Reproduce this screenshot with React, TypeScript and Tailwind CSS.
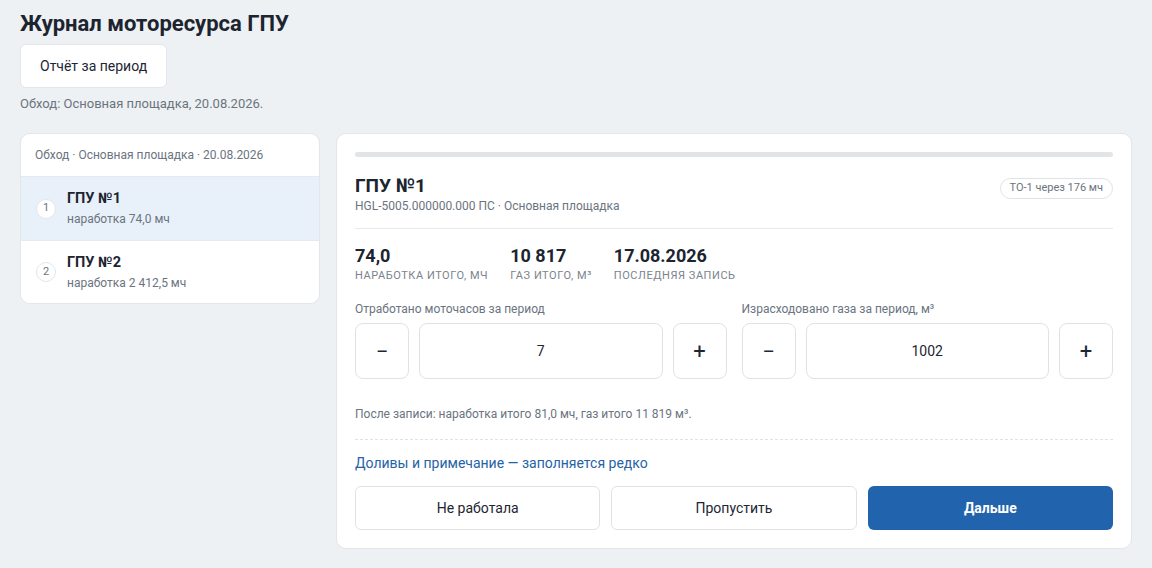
import { useState } from "react";

const units = [
  { id: 1, name: "ГПУ №1", hours: "наработка 74,0 мч" },
  { id: 2, name: "ГПУ №2", hours: "наработка 2 412,5 мч" },
];

const stats = [
  { value: "74,0", label: "Наработка итого, мч" },
  { value: "10 817", label: "Газ итого, м³" },
  { value: "17.08.2026", label: "Последняя запись" },
];

function Stepper({ label, value }: { label: string; value: number }) {
  return (
    <div className="flex-1 min-w-0">
      <p className="text-[12px] text-[#6b7480] mb-[6px] leading-[16px]">{label}</p>
      <div className="flex gap-[10px]">
        <button className="w-[54px] h-[56px] flex-shrink-0 rounded-[8px] border border-[#dfe3e7] bg-white text-[#1d2633] text-[22px] flex items-center justify-center">
          −
        </button>
        <div className="flex-1 h-[56px] rounded-[8px] border border-[#dfe3e7] bg-white flex items-center justify-center text-[14px] text-[#1d2633]">
          {value}
        </div>
        <button className="w-[54px] h-[56px] flex-shrink-0 rounded-[8px] border border-[#dfe3e7] bg-white text-[#1d2633] text-[22px] flex items-center justify-center">
          +
        </button>
      </div>
    </div>
  );
}

export default function App() {
  const [active, setActive] = useState(1);

  return (
    <div className="min-h-[568px] bg-[#eef1f3] px-5 pt-[10px] pb-5 font-['Roboto',sans-serif] text-[#1d2633]">
      <h1 className="text-[22px] font-bold leading-[28px] text-[#1c2430]">Журнал моторесурса ГПУ</h1>
      <button className="mt-[6px] h-[44px] px-[19px] rounded-[6px] bg-white border border-[#e3e6ea] text-[14px] text-[#1d2633]">
        Отчёт за период
      </button>
      <p className="mt-[8px] text-[13px] leading-[16px] text-[#6b7480]">Обход: Основная площадка, 20.08.2026.</p>

      <div className="mt-[21px] flex gap-[16px] items-start">
        {/* Route list */}
        <div className="w-[300px] flex-shrink-0 bg-white border border-[#e3e6ea] rounded-[10px] overflow-hidden">
          <div className="h-[43px] px-[14px] flex items-center text-[12px] text-[#6b7480] border-b border-[#e6e9ed]">
            Обход · Основная площадка · 20.08.2026
          </div>
          {units.map((u, i) => (
            <div
              key={u.id}
              onClick={() => setActive(u.id)}
              className={`h-[63px] flex items-center gap-[11px] px-[15px] cursor-pointer ${
                i > 0 ? "border-t border-[#e6e9ed]" : ""
              } ${active === u.id ? "bg-[#e8f1fa]" : "bg-white"}`}
            >
              <span className="w-[20px] h-[20px] rounded-full bg-white border border-[#e3e6ea] flex items-center justify-center text-[11px] text-[#6b7480]">
                {u.id}
              </span>
              <div>
                <p className="text-[14.5px] font-bold leading-[18px] text-[#1c2430]">{u.name}</p>
                <p className="mt-[3px] text-[12px] leading-[16px] text-[#6b7480]">{u.hours}</p>
              </div>
            </div>
          ))}
        </div>

        {/* Entry card */}
        <div className="flex-1 bg-white border border-[#e3e6ea] rounded-[10px] px-[18px] pt-[18px] pb-[18px]">
          <div className="h-[5px] rounded-full bg-[#e2e5e8]" />

          <div className="mt-[17px] flex justify-between items-start">
            <div>
              <h2 className="text-[19px] font-bold leading-[24px] text-[#1c2430]">ГПУ №1</h2>
              <p className="text-[12px] leading-[16px] text-[#6b7480]">HGL-5005.000000.000 ПС · Основная площадка</p>
            </div>
            <span className="mt-[4px] h-[21px] px-[9px] rounded-full border border-[#dfe3e7] text-[11px] text-[#6b7480] flex items-center">
              ТО-1 через 176 мч
            </span>
          </div>

          <div className="mt-[14px] border-t border-[#e6e9ed]" />

          <div className="mt-[15px] flex gap-[22px]">
            {stats.map((s) => (
              <div key={s.label}>
                <p className="text-[18px] font-bold leading-[24px] text-[#1c2430]">{s.value}</p>
                <p className="text-[11px] uppercase tracking-[0.05em] leading-[16px] text-[#7b838d]">{s.label}</p>
              </div>
            ))}
          </div>

          <div className="mt-[17px] flex gap-[15px]">
            <Stepper label="Отработано моточасов за период" value={7} />
            <Stepper label="Израсходовано газа за период, м³" value={1002} />
          </div>

          <p className="mt-[27px] text-[12px] leading-[16px] text-[#6b7480]">
            После записи: наработка итого 81,0 мч, газ итого 11 819 м³.
          </p>

          <div className="mt-[17px] border-t border-dashed border-[#dfe3e7]" />

          <p className="mt-[13px] text-[14px] leading-[20px] text-[#2563a6]">Доливы и примечание — заполняется редко</p>

          <div className="mt-[13px] grid grid-cols-3 gap-[11px]">
            <button className="h-[44px] rounded-[6px] border border-[#dfe3e7] bg-white text-[14px] text-[#1d2633]">
              Не работала
            </button>
            <button className="h-[44px] rounded-[6px] border border-[#dfe3e7] bg-white text-[14px] text-[#1d2633]">
              Пропустить
            </button>
            <button className="h-[44px] rounded-[6px] bg-[#2163ad] text-[14px] font-bold text-white">
              Дальше
            </button>
          </div>
        </div>
      </div>
    </div>
  );
}
